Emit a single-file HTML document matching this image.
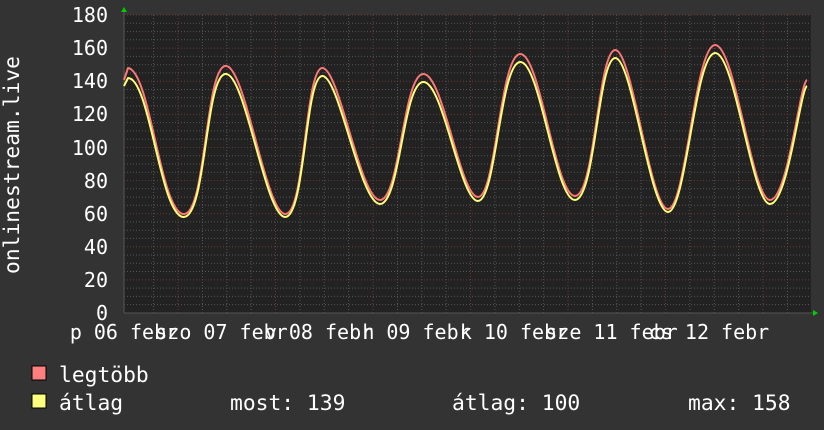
<!DOCTYPE html>
<html><head><meta charset="utf-8"><style>
html,body{margin:0;padding:0;background:#333;}
svg{display:block;font-family:"DejaVu Sans Mono","Liberation Mono",monospace;}
</style></head><body>
<svg width="824" height="430" xmlns="http://www.w3.org/2000/svg">
<rect width="824" height="430" fill="#333"/>
<rect x="124" y="15" width="687" height="298" fill="#222"/>
<g stroke="#555" stroke-width="1" stroke-dasharray="1,2">
<line x1="124" x2="811" y1="23.3" y2="23.3"/><line x1="124" x2="811" y1="31.6" y2="31.6"/><line x1="124" x2="811" y1="39.8" y2="39.8"/>
<line x1="124" x2="811" y1="56.4" y2="56.4"/><line x1="124" x2="811" y1="64.7" y2="64.7"/><line x1="124" x2="811" y1="72.9" y2="72.9"/>
<line x1="124" x2="811" y1="89.5" y2="89.5"/><line x1="124" x2="811" y1="97.8" y2="97.8"/><line x1="124" x2="811" y1="106" y2="106"/>
<line x1="124" x2="811" y1="122.6" y2="122.6"/><line x1="124" x2="811" y1="130.9" y2="130.9"/><line x1="124" x2="811" y1="139.1" y2="139.1"/>
<line x1="124" x2="811" y1="155.7" y2="155.7"/><line x1="124" x2="811" y1="164" y2="164"/><line x1="124" x2="811" y1="172.2" y2="172.2"/>
<line x1="124" x2="811" y1="188.8" y2="188.8"/><line x1="124" x2="811" y1="197.1" y2="197.1"/><line x1="124" x2="811" y1="205.3" y2="205.3"/>
<line x1="124" x2="811" y1="221.9" y2="221.9"/><line x1="124" x2="811" y1="230.2" y2="230.2"/><line x1="124" x2="811" y1="238.4" y2="238.4"/>
<line x1="124" x2="811" y1="255" y2="255"/><line x1="124" x2="811" y1="263.3" y2="263.3"/><line x1="124" x2="811" y1="271.5" y2="271.5"/>
<line x1="124" x2="811" y1="288.1" y2="288.1"/><line x1="124" x2="811" y1="296.4" y2="296.4"/><line x1="124" x2="811" y1="304.6" y2="304.6"/>
<line y1="15" y2="313" x1="153.6" x2="153.6"/><line y1="15" y2="313" x1="202.4" x2="202.4"/><line y1="15" y2="313" x1="226.8" x2="226.8"/><line y1="15" y2="313" x1="251.1" x2="251.1"/>
<line y1="15" y2="313" x1="299.9" x2="299.9"/><line y1="15" y2="313" x1="324.3" x2="324.3"/><line y1="15" y2="313" x1="348.6" x2="348.6"/>
<line y1="15" y2="313" x1="397.4" x2="397.4"/><line y1="15" y2="313" x1="421.8" x2="421.8"/><line y1="15" y2="313" x1="446.1" x2="446.1"/>
<line y1="15" y2="313" x1="494.9" x2="494.9"/><line y1="15" y2="313" x1="519.3" x2="519.3"/><line y1="15" y2="313" x1="543.6" x2="543.6"/>
<line y1="15" y2="313" x1="592.4" x2="592.4"/><line y1="15" y2="313" x1="616.8" x2="616.8"/><line y1="15" y2="313" x1="641.1" x2="641.1"/>
<line y1="15" y2="313" x1="689.9" x2="689.9"/><line y1="15" y2="313" x1="714.3" x2="714.3"/><line y1="15" y2="313" x1="738.6" x2="738.6"/>
<line y1="15" y2="313" x1="787.4" x2="787.4"/>
</g>
<g stroke="#6a3a3a" stroke-width="1" stroke-dasharray="1,2">
<line x1="124" x2="811" y1="15" y2="15"/><line x1="124" x2="811" y1="48.1" y2="48.1"/><line x1="124" x2="811" y1="81.2" y2="81.2"/>
<line x1="124" x2="811" y1="114.3" y2="114.3"/><line x1="124" x2="811" y1="147.4" y2="147.4"/><line x1="124" x2="811" y1="180.6" y2="180.6"/>
<line x1="124" x2="811" y1="213.7" y2="213.7"/><line x1="124" x2="811" y1="246.8" y2="246.8"/><line x1="124" x2="811" y1="279.9" y2="279.9"/>
<line y1="15" y2="313" x1="178" x2="178"/><line y1="15" y2="313" x1="275.5" x2="275.5"/><line y1="15" y2="313" x1="373" x2="373"/>
<line y1="15" y2="313" x1="470.5" x2="470.5"/><line y1="15" y2="313" x1="568" x2="568"/><line y1="15" y2="313" x1="665.5" x2="665.5"/><line y1="15" y2="313" x1="763" x2="763"/>
</g>
<line x1="124" y1="313" x2="813" y2="313" stroke="#555"/>
<line x1="124" y1="10" x2="124" y2="313" stroke="#555"/>
<polygon points="121,12 127,12 124,7" fill="#0c0"/>
<polygon points="813,310 813,316 818,313" fill="#0c0"/>
<path fill="none" stroke="#ff7878" stroke-width="2" stroke-linejoin="round" d="M124,80 L128,68 C150,70 160,210 183,214 S205,70 225,66 S265,212 285,214 S305,70 322,68 S360,200 380,200 S403,76 423,74 S460,197 478,197 S500,56 520,54 S555,196 575,196 S598,52 615,50 S650,209 668,209 S695,46 715,45 S752,200 770,200 S800,82 807,80"/>
<path fill="none" stroke="#ffff78" stroke-width="2" stroke-linejoin="round" d="M124,86 L128,78 C150,78 160,214 183,217 S205,78 225,74 S265,216 285,217 S305,78 322,76 S360,204 380,204 S403,84 423,82 S460,201 478,201 S500,64 520,62 S555,200 575,200 S598,60 615,58 S650,212 668,212 S695,54 715,53 S752,204 770,204 S800,90 807,86"/>
<g fill="#fff" font-size="20" text-anchor="end">
<text x="108" y="22">180</text><text x="108" y="55">160</text><text x="108" y="88">140</text><text x="108" y="121">120</text>
<text x="108" y="155">100</text><text x="108" y="188">80</text><text x="108" y="221">60</text><text x="108" y="254">40</text>
<text x="108" y="287">20</text><text x="108" y="320">0</text>
</g>
<text transform="translate(19,165) rotate(-90)" fill="#fff" font-size="21.3" text-anchor="middle">onlinestream.live</text>
<g fill="#fff" font-size="20" text-anchor="middle">
<text x="124" y="339">p 06 febr</text><text x="221.5" y="339">szo 07 febr</text><text x="319" y="339">v 08 febr</text>
<text x="416.5" y="339">h 09 febr</text><text x="514" y="339">k 10 febr</text><text x="611.5" y="339">sze 11 febr</text><text x="709" y="339">cs 12 febr</text>
</g>
<rect x="32" y="366" width="14" height="14" fill="#ff7f7f" stroke="#000"/>
<rect x="32" y="394" width="14" height="14" fill="#ffff7f" stroke="#000"/>
<g fill="#fff" font-size="21.3">
<text x="59" y="382">legtöbb</text><text x="59" y="410">átlag</text>
<text x="230" y="410">most: 139</text><text x="452" y="410">átlag: 100</text><text x="688" y="410">max: 158</text>
</g>
</svg>
</body></html>
